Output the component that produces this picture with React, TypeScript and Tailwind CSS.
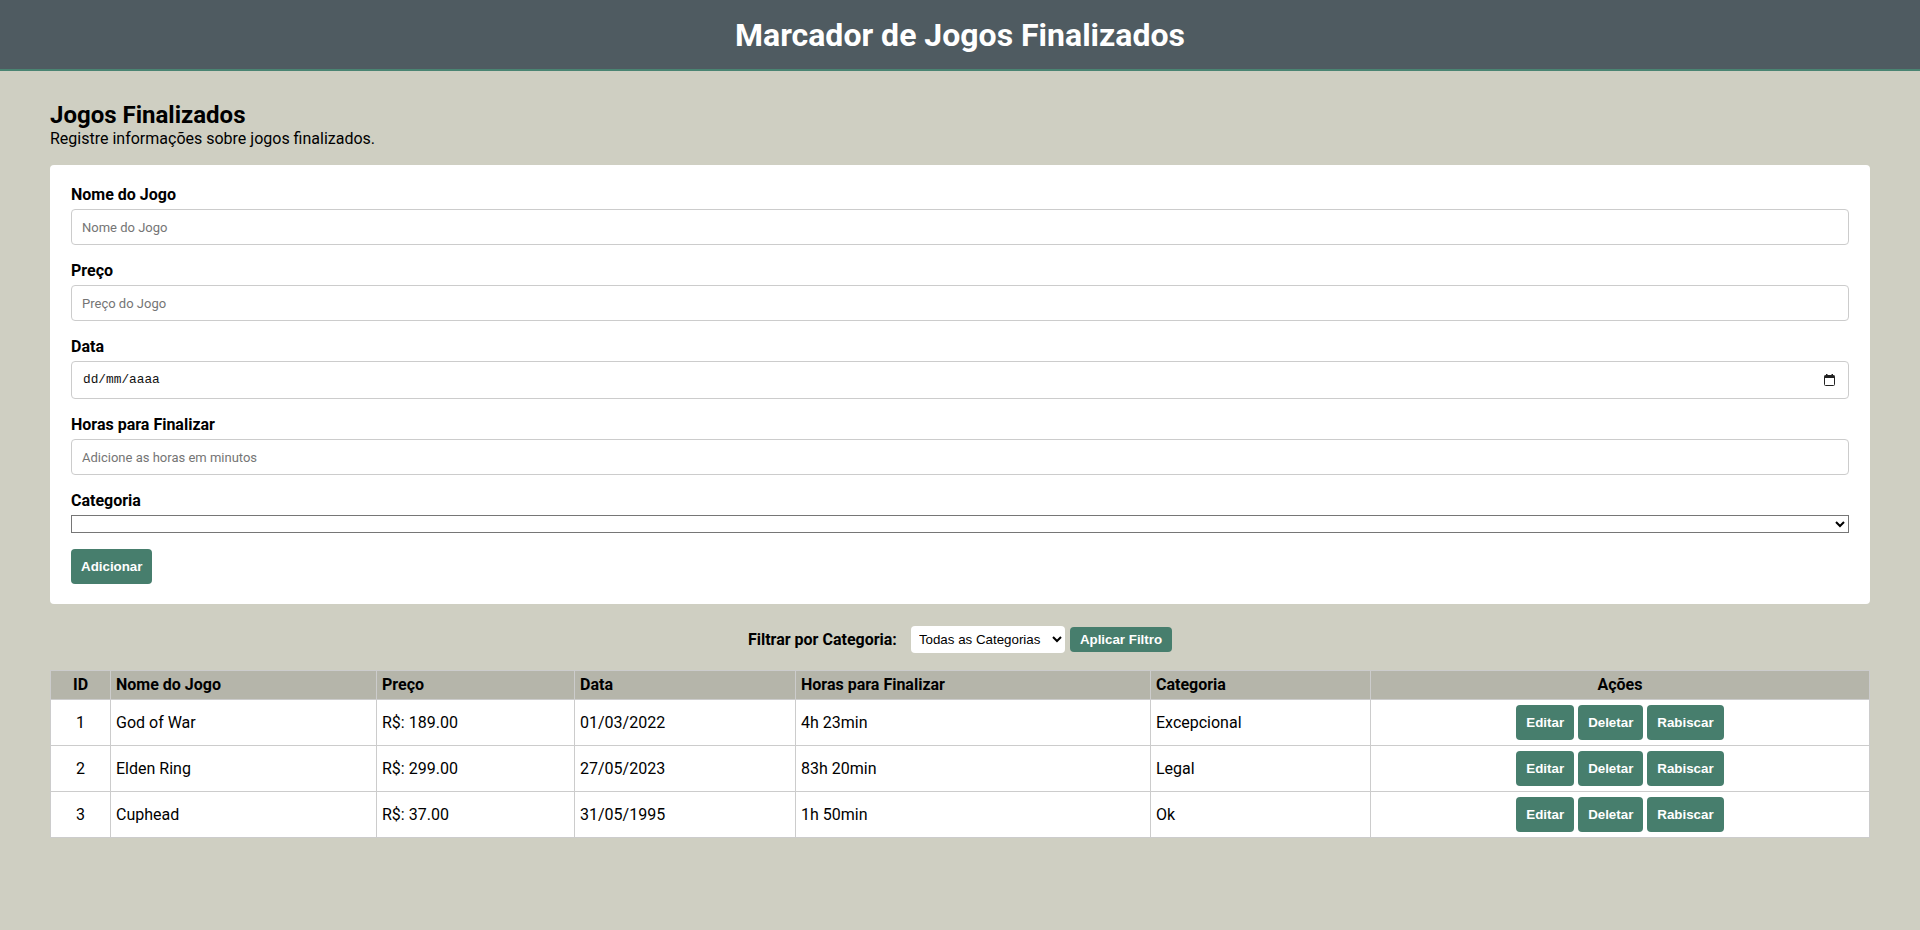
import { useState } from "react";

type Jogo = {
  id: number;
  nome: string;
  preco: string;
  data: string;
  horas: string;
  categoria: string;
};

const JOGOS: Jogo[] = [
  { id: 1, nome: "God of War", preco: "R$: 189.00", data: "01/03/2022", horas: "4h 23min", categoria: "Excepcional" },
  { id: 2, nome: "Elden Ring", preco: "R$: 299.00", data: "27/05/2023", horas: "83h 20min", categoria: "Legal" },
  { id: 3, nome: "Cuphead", preco: "R$: 37.00", data: "31/05/1995", horas: "1h 50min", categoria: "Ok" },
];

const btn =
  "rounded-[4px] bg-[#477e6d] font-['Liberation_Sans',Arial,sans-serif] text-[13.33px] font-bold leading-[15px] text-white";

const inputCls =
  "block h-[36px] w-full rounded-[4px] border border-[#cccccc] bg-white px-[10px] font-['Roboto',sans-serif] text-[13px] text-black placeholder:text-[#757575] outline-none";

const Field = ({ label, children }: { label: string; children: React.ReactNode }) => (
  <div className="mb-[16px]">
    <label className="mb-[4px] block text-[16px] font-bold leading-[20px]">{label}</label>
    {children}
  </div>
);

const App = () => {
  const [filtro, setFiltro] = useState("todas");

  return (
    <div className="min-h-[930px] bg-[#cfcfc2] font-['Roboto',sans-serif] text-black">
      <header className="flex h-[71px] items-center justify-center border-b-2 border-[#4a8472] bg-[#4f5b61]">
        <h1 className="text-[32px] font-bold leading-[38px] text-white">Marcador de Jogos Finalizados</h1>
      </header>

      <main className="px-[50px] pt-[30px]">
        <h2 className="text-[24px] font-bold leading-[28px]">Jogos Finalizados</h2>
        <p className="text-[16px] leading-[20px]">Registre informações sobre jogos finalizados.</p>

        <form className="mt-[16px] rounded-[4px] bg-white px-[21px] pb-[20px] pt-[20px]">
          <Field label="Nome do Jogo">
            <input className={inputCls} placeholder="Nome do Jogo" />
          </Field>
          <Field label="Preço">
            <input className={inputCls} placeholder="Preço do Jogo" />
          </Field>
          <div className="mb-[16px]">
            <label className="mb-[4px] block text-[16px] font-bold leading-[20px]">Data</label>
            <div className="flex h-[38px] w-full items-center justify-between rounded-[4px] border border-[#cccccc] bg-white pl-[11px] pr-[13px]">
              <span className="font-['Liberation_Mono',monospace] text-[12.8px] text-[#111]">dd/mm/aaaa</span>
              <svg width="11" height="12" viewBox="0 0 11 12" fill="none">
                <rect x="0.5" y="1.5" width="10" height="10" rx="1" stroke="#222" />
                <rect x="0.5" y="1.5" width="10" height="2.5" fill="#222" />
                <rect x="2" y="0" width="1.5" height="2" fill="#222" />
                <rect x="7.5" y="0" width="1.5" height="2" fill="#222" />
              </svg>
            </div>
          </div>
          <Field label="Horas para Finalizar">
            <input className={inputCls} placeholder="Adicione as horas em minutos" />
          </Field>
          <Field label="Categoria">
            <select className="block h-[18px] w-full border border-[#767676] bg-white font-['Liberation_Sans',Arial,sans-serif] text-[13.33px]">
              <option value=""></option>
            </select>
          </Field>
          <button type="button" className={`${btn} px-[10px] py-[10px]`}>
            Adicionar
          </button>
        </form>

        <div className="mt-[22px] flex h-[27px] items-center justify-center">
          <span className="mr-[14px] text-[16px] font-bold">Filtrar por Categoria:</span>
          <select
            value={filtro}
            onChange={(e) => setFiltro(e.target.value)}
            className="h-[27px] w-[154px] rounded-[4px] bg-white px-[4px] font-['Liberation_Sans',Arial,sans-serif] text-[13.33px]"
          >
            <option value="todas">Todas as Categorias</option>
            <option value="excepcional">Excepcional</option>
            <option value="legal">Legal</option>
            <option value="ok">Ok</option>
          </select>
          <button type="button" className={`${btn} ml-[5px] h-[25px] px-[10px]`}>
            Aplicar Filtro
          </button>
        </div>

        <table className="mt-[17px] w-full table-fixed border-collapse text-[16px]">
          <colgroup>
            <col className="w-[60px]" />
            <col className="w-[266px]" />
            <col className="w-[198px]" />
            <col className="w-[221px]" />
            <col className="w-[355px]" />
            <col className="w-[220px]" />
            <col />
          </colgroup>
          <thead>
            <tr className="h-[29px] bg-[#b5b5aa] font-bold">
              <th className="border border-[#cccccc] text-center">ID</th>
              <th className="border border-[#cccccc] pl-[5px] text-left">Nome do Jogo</th>
              <th className="border border-[#cccccc] pl-[5px] text-left">Preço</th>
              <th className="border border-[#cccccc] pl-[5px] text-left">Data</th>
              <th className="border border-[#cccccc] pl-[5px] text-left">Horas para Finalizar</th>
              <th className="border border-[#cccccc] pl-[5px] text-left">Categoria</th>
              <th className="border border-[#cccccc] text-center">Ações</th>
            </tr>
          </thead>
          <tbody>
            {JOGOS.map((j) => (
              <tr key={j.id} className="h-[46px] bg-white">
                <td className="border border-[#cccccc] text-center">{j.id}</td>
                <td className="border border-[#cccccc] pl-[5px]">{j.nome}</td>
                <td className="border border-[#cccccc] pl-[5px]">{j.preco}</td>
                <td className="border border-[#cccccc] pl-[5px]">{j.data}</td>
                <td className="border border-[#cccccc] pl-[5px]">{j.horas}</td>
                <td className="border border-[#cccccc] pl-[5px]">{j.categoria}</td>
                <td className="border border-[#cccccc]">
                  <div className="flex justify-center gap-[4px]">
                    <button type="button" className={`${btn} p-[10px]`}>Editar</button>
                    <button type="button" className={`${btn} p-[10px]`}>Deletar</button>
                    <button type="button" className={`${btn} p-[10px]`}>Rabiscar</button>
                  </div>
                </td>
              </tr>
            ))}
          </tbody>
        </table>
      </main>
    </div>
  );
};

export default App;
